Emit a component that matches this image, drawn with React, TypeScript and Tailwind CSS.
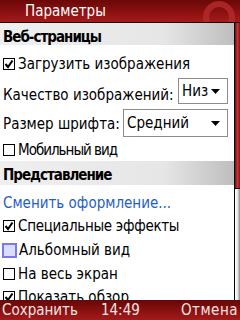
import React from "react";

const font = { fontFamily: '"DejaVu Sans Condensed", "DejaVu Sans", sans-serif' };

function Check({ checked, focused }: { checked?: boolean; focused?: boolean }) {
  if (focused) {
    return (
      <span className="mr-[2px] ml-[2px] inline-block h-[15px] w-[15px] shrink-0 border-2 border-[#7878f0] bg-[#dcdcff]" />
    );
  }
  return (
    <span className="mr-[3px] ml-[3px] flex h-[12px] w-[12px] shrink-0 items-center justify-center border border-black bg-white">
      {checked && (
        <svg width="10" height="10" viewBox="0 0 10 10">
          <path d="M1.5 5 L4 8 L8.5 1.5" fill="none" stroke="black" strokeWidth="2" />
        </svg>
      )}
    </span>
  );
}

function Row({ children, h, pt }: { children: React.ReactNode; h: string; pt: string }) {
  return <div className={`flex items-center whitespace-nowrap leading-[18px] ${h} ${pt}`}>{children}</div>;
}

function Header({ label, cls }: { label: string; cls: string }) {
  return (
    <div
      className={`whitespace-nowrap pl-[3px] font-bold leading-[18px] tracking-[-1px] text-black bg-[linear-gradient(to_right,#efefef,#e6e6e6_70%,#bebebe)] ${cls}`}
    >
      {label}
    </div>
  );
}

function Drop({ text, w, h }: { text: string; w: string; h: string }) {
  return (
    <div className={`flex items-center justify-between border border-[#8c8c8c] bg-white pl-[3px] pr-[7px] ${w} ${h}`}>
      <span>{text}</span>
      <svg width="9" height="5" viewBox="0 0 9 5">
        <path d="M0 0 H9 L4.5 5 Z" fill="black" />
      </svg>
    </div>
  );
}

export default function App() {
  return (
    <div className="flex h-[320px] w-[240px] flex-col overflow-hidden bg-white text-[15px] text-black" style={font}>
      <div className="relative h-[23px] shrink-0 overflow-hidden border-b border-[#1a0000] bg-[linear-gradient(to_bottom,#6a0808,#8e1212_60%,#a51a1a)]">
        <span className="absolute left-[25px] top-[2px] text-[15px] leading-[18px] text-white">Параметры</span>
        <svg className="absolute left-[202px] top-[1px]" width="36" height="30" viewBox="0 0 36 30">
          <ellipse cx="17" cy="16" rx="13" ry="13" fill="none" stroke="#b82a2a" strokeWidth="6" opacity="0.8" />
        </svg>
      </div>
      <div className="flex min-h-0 flex-1">
        <div className="w-[234px] overflow-hidden">
          <Header label="Веб-страницы" cls="h-[22px] pt-[5px]" />
          <Row h="h-[31px]" pt="pt-[6px]">
            <Check checked />
            <span>Загрузить изображения</span>
          </Row>
          <div className="flex h-[30px] items-start whitespace-nowrap">
            <span className="ml-[3px] mt-[10px] leading-[18px]">Качество изображений:</span>
            <div className="ml-auto mr-[6px] mt-[2px]">
              <Drop text="Низ" w="w-[50px]" h="h-[26px]" />
            </div>
          </div>
          <div className="flex h-[32px] items-start whitespace-nowrap">
            <span className="ml-[3px] mt-[9px] leading-[18px]">Размер шрифта:</span>
            <div className="ml-auto mr-[6px] mt-[3px]">
              <Drop text="Средний" w="w-[105px]" h="h-[28px]" />
            </div>
          </div>
          <Row h="h-[23px]" pt="pt-[0px]">
            <Check />
            <span className="tracking-[-1px]">Мобильный вид</span>
          </Row>
          <Header label="Представление" cls="h-[24px] pt-[5px]" />
          <div className="h-[26px] whitespace-nowrap pl-[3px] pt-[9px] leading-[18px] text-[#1f5fc4]">Сменить оформление...</div>
          <Row h="h-[24px]" pt="pt-[6px]">
            <Check checked />
            <span className="tracking-[-0.3px]">Специальные эффекты</span>
          </Row>
          <Row h="h-[24px]" pt="pt-[6px]">
            <Check focused />
            <span>Альбомный вид</span>
          </Row>
          <Row h="h-[23px]" pt="pt-[6px]">
            <Check />
            <span>На весь экран</span>
          </Row>
          <Row h="h-[24px]" pt="pt-[6px]">
            <Check checked />
            <span>Показать обзор</span>
          </Row>
        </div>
        <div className="flex w-[6px] flex-col border-l border-black">
          <div className="h-[165px] bg-[linear-gradient(to_right,#7a0a0a,#c43434_50%,#8a1010)]" />
          <div className="flex-1 border-t border-black bg-[linear-gradient(to_right,#ffffff,#e8e8e8_50%,#8a8a8a)]" />
        </div>
      </div>
      <div className="flex h-[20px] shrink-0 items-center whitespace-nowrap bg-[linear-gradient(to_bottom,#660808,#8a1111_55%,#a31a1a)] px-[2px] text-[15px] leading-[18px] text-[#f4e4e4]">
        <span>Сохранить</span>
        <span className="ml-[23px]">14:49</span>
        <span className="ml-auto tracking-[0.5px]">Отмена</span>
      </div>
    </div>
  );
}
